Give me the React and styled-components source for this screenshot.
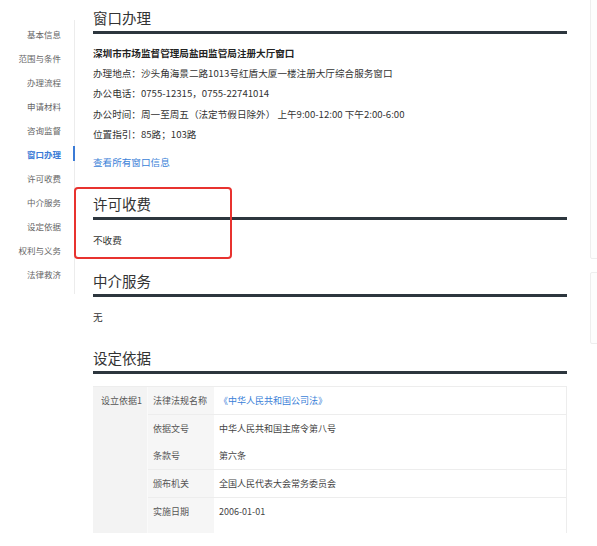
import React from 'react'
import styled, { createGlobalStyle } from 'styled-components'

const GlobalStyle = createGlobalStyle`
  html, body {
    margin: 0;
    padding: 0;
    background: #fff;
  }
  body {
    font-family: "Noto Sans CJK SC", "Noto Sans", sans-serif;
    color: #333;
  }
`

const Page = styled.div`
  position: relative;
  display: flex;
  align-items: flex-start;
  width: 597px;
  height: 546px;
  overflow: hidden;
`

const Sidebar = styled.ul`
  list-style: none;
  margin: 20px 0 0;
  padding: 2px 0 8px;
  width: 75px;
  border-right: 1px solid #ececec;
  box-sizing: border-box;
`

const NavItem = styled.li`
  height: 24px;
  line-height: 24px;
  padding-right: 14px;
  margin-right: -1px;
  text-align: right;
  font-size: 8.5px;
  white-space: nowrap;
  color: ${p => (p.$active ? '#3b7bd6' : '#666')};
  font-weight: ${p => (p.$active ? 600 : 400)};
  position: relative;

  &::after {
    content: '';
    display: ${p => (p.$active ? 'block' : 'none')};
    position: absolute;
    right: 0;
    top: 4px;
    width: 2px;
    height: 15px;
    background: #3b7bd6;
  }
`

const Main = styled.main`
  width: 474px;
  margin-left: 18px;
  padding-top: 8px;
`

const Section = styled.section`
  margin-top: ${p => p.$gap || 0}px;
`

const SectionTitle = styled.h2`
  margin: 0;
  font-size: 14.5px;
  font-weight: 400;
  line-height: 20px;
  padding-bottom: 3px;
  border-bottom: 3px solid #2d363e;
  color: #333;
`

const Body = styled.div`
  margin-top: ${p => p.$top || 9}px;
  font-size: 9.6px;
  line-height: 20.2px;
  color: #333;
`

const Strong = styled.div`
  font-weight: 700;
  color: #222;
`

const Link = styled.a`
  display: block;
  margin-top: 8px;
  color: #3b7fd8;
  text-decoration: none;
`

const Table = styled.div`
  display: flex;
  margin-top: 12px;
  border-top: 1px solid #ededed;
  border-right: 1px solid #ededed;
  font-size: 9px;
  color: #444;
`

const GroupCell = styled.div`
  width: 55px;
  flex-shrink: 0;
  background: #f3f3f3;
  border-right: 1px solid #fafafa;
  padding-left: 8px;
  box-sizing: border-box;
  line-height: 27px;
  color: #555;
`

const Rows = styled.div`
  flex: 1;
`

const Row = styled.div`
  display: grid;
  grid-template-columns: 66px 1fr;
  border-bottom: ${p => (p.$last ? 'none' : '1px solid #ededed')};
  padding-bottom: ${p => (p.$last ? 8 : 0)}px;
  background: linear-gradient(to right, #f6f6f6 66px, #fff 66px);
`

const Label = styled.div`
  line-height: 27px;
  padding-left: 5px;
  color: #555;
`

const Value = styled.div`
  line-height: 27px;
  padding-left: 5px;
  color: ${p => (p.$link ? '#3b7fd8' : '#444')};
`

const Annotation = styled.div`
  position: absolute;
  left: 74px;
  top: 187px;
  width: 158px;
  height: 72px;
  border: 2px solid #e8322f;
  border-radius: 4px;
  box-sizing: border-box;
  pointer-events: none;
`

const DockPanel = styled.div`
  position: absolute;
  left: 590px;
  top: ${p => p.$top}px;
  width: 20px;
  height: ${p => p.$height}px;
  border: 1px solid #eeeeee;
  border-radius: 2px;
  background: #fdfdfd;
`

const navItems = ['基本信息', '范围与条件', '办理流程', '申请材料', '咨询监督', '窗口办理', '许可收费', '中介服务', '设定依据', '权利与义务', '法律救济']

const basis = [
  [['法律法规名称', '《中华人民共和国公司法》', true]],
  [['依据文号', '中华人民共和国主席令第八号'], ['条款号', '第六条']],
  [['颁布机关', '全国人民代表大会常务委员会']],
  [['实施日期', '2006-01-01']],
]

const App = () => (
  <Page>
    <GlobalStyle />
    <Sidebar>
      {navItems.map(item => (
        <NavItem key={item} $active={item === '窗口办理'}>{item}</NavItem>
      ))}
    </Sidebar>
    <Main>
      <Section>
        <SectionTitle>窗口办理</SectionTitle>
        <Body>
          <Strong>深圳市市场监督管理局盐田监管局注册大厅窗口</Strong>
          <div>办理地点：沙头角海景二路1013号红盾大厦一楼注册大厅综合服务窗口</div>
          <div>办公电话：0755-12315，0755-22741014</div>
          <div>办公时间：周一至周五（法定节假日除外） 上午9:00-12:00 下午2:00-6:00</div>
          <div>位置指引：85路；103路</div>
          <Link href="#">查看所有窗口信息</Link>
        </Body>
      </Section>
      <Section $gap={22}>
        <SectionTitle>许可收费</SectionTitle>
        <Body $top={10}>不收费</Body>
      </Section>
      <Section $gap={21}>
        <SectionTitle>中介服务</SectionTitle>
        <Body $top={10}>无</Body>
      </Section>
      <Section $gap={20}>
        <SectionTitle>设定依据</SectionTitle>
        <Table>
          <GroupCell>设立依据1</GroupCell>
          <Rows>
            {basis.map((row, i) => (
              <Row key={i} $last={i === basis.length - 1}>
                {row.map(([label, value, link]) => (
                  <React.Fragment key={label}>
                    <Label>{label}</Label>
                    <Value $link={link}>{value}</Value>
                  </React.Fragment>
                ))}
              </Row>
            ))}
          </Rows>
        </Table>
      </Section>
    </Main>
    <Annotation />
    <DockPanel $top={-2} $height={259} />
    <DockPanel $top={272} $height={70} />
  </Page>
)

export default App
